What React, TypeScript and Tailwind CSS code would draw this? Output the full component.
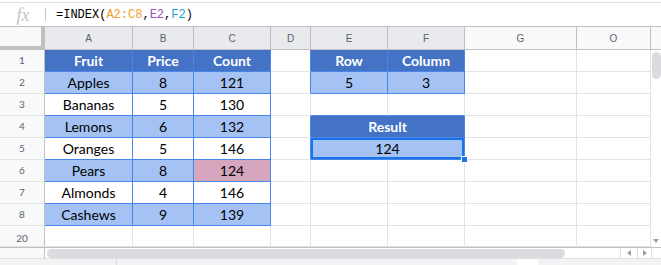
import React from 'react';

type Kind = 'hdr' | 'lite' | 'pink' | 'plain';
type Cell = { text?: string; kind?: Kind; span?: number; sel?: boolean };

const COLS = ['A', 'B', 'C', 'D', 'E', 'F', 'G', 'O'];
const DARK_HDR = ['A', 'B', 'C', 'D', 'E', 'F'];

// table areas that get the blue border
const inTable = (r: number, c: number) => {
  if (r >= 1 && r <= 8 && c >= 0 && c <= 2) return true;
  if ([1, 2, 4, 5].includes(r) && (c === 4 || c === 5)) return true;
  return false;
};

const ROWS: { n: number; h: string; cells: Record<number, Cell> }[] = [
  { n: 1, h: 'h-[22px]', cells: { 0: { text: 'Fruit', kind: 'hdr' }, 1: { text: 'Price', kind: 'hdr' }, 2: { text: 'Count', kind: 'hdr' }, 4: { text: 'Row', kind: 'hdr' }, 5: { text: 'Column', kind: 'hdr' } } },
  { n: 2, h: 'h-[22px]', cells: { 0: { text: 'Apples', kind: 'lite' }, 1: { text: '8', kind: 'lite' }, 2: { text: '121', kind: 'lite' }, 4: { text: '5', kind: 'lite' }, 5: { text: '3', kind: 'lite' } } },
  { n: 3, h: 'h-[22px]', cells: { 0: { text: 'Bananas' }, 1: { text: '5' }, 2: { text: '130' } } },
  { n: 4, h: 'h-[22px]', cells: { 0: { text: 'Lemons', kind: 'lite' }, 1: { text: '6', kind: 'lite' }, 2: { text: '132', kind: 'lite' }, 4: { text: 'Result', kind: 'hdr', span: 2 } } },
  { n: 5, h: 'h-[22px]', cells: { 0: { text: 'Oranges' }, 1: { text: '5' }, 2: { text: '146' }, 4: { text: '124', kind: 'lite', span: 2, sel: true } } },
  { n: 6, h: 'h-[22px]', cells: { 0: { text: 'Pears', kind: 'lite' }, 1: { text: '8', kind: 'lite' }, 2: { text: '124', kind: 'pink' } } },
  { n: 7, h: 'h-[22px]', cells: { 0: { text: 'Almonds' }, 1: { text: '4' }, 2: { text: '146' } } },
  { n: 8, h: 'h-[22px]', cells: { 0: { text: 'Cashews', kind: 'lite' }, 1: { text: '9', kind: 'lite' }, 2: { text: '139', kind: 'lite' } } },
  { n: 20, h: 'h-[21px]', cells: {} },
];

const bgFor = (k?: Kind) =>
  k === 'hdr' ? 'bg-[#4472c4] text-white font-bold' : k === 'lite' ? 'bg-[#a4c2f4]' : k === 'pink' ? 'bg-[#d5a6bd]' : 'bg-white';

function Row({ n, h, cells }: { n: number; h: string; cells: Record<number, Cell> }) {
  const out: React.ReactNode[] = [];
  for (let c = 0; c < COLS.length; c++) {
    const cell = cells[c] || {};
    const span = cell.span || 1;
    const last = c + span - 1;
    const rightBlue = inTable(n, last) || inTable(n, last + 1);
    const bottomBlue = inTable(n, c) || inTable(n + 1, c);
    out.push(
      <div
        key={c}
        className={`relative flex items-center justify-center border-r border-b text-[14px] text-black ${h} ${bgFor(cell.kind)} ${rightBlue ? 'border-r-[#4a86e8]' : 'border-r-[#e2e3e3]'} ${bottomBlue ? 'border-b-[#4a86e8]' : 'border-b-[#e2e3e3]'} ${span === 2 ? 'col-span-2' : ''} ${cell.sel ? 'shadow-[inset_0_0_0_2px_#1a73e8]' : ''}`}
      >
        {cell.text}
        {cell.sel && (
          <div className="absolute -right-[4px] -bottom-[4px] w-[7px] h-[7px] bg-[#1a73e8] border border-white z-10" />
        )}
      </div>
    );
    c += span - 1;
  }
  return (
    <>
      <div className={`flex ${n === 20 ? 'items-end' : 'items-center'} justify-center bg-[#f8f9fa] border-r border-b border-r-[#c0c0c0] border-b-[#e2e3e3] text-[10px] text-[#5f6368] ${h}`}>
        {n}
      </div>
      {out}
    </>
  );
}

export default function App() {
  return (
    <div className="w-[661px] h-[265px] bg-white overflow-hidden flex flex-col" style={{ fontFamily: 'Lato, "Liberation Sans", sans-serif' }}>
      {/* Formula bar */}
      <div className="h-[24px] mt-[2px] border-t border-[#e0e0e0] flex items-center">
        <div className="w-[45px] flex items-center justify-center">
          <span className="text-[18px] italic text-[#c4c4c4] pl-[1px] leading-none" style={{ fontFamily: '"Liberation Serif", serif' }}>fx</span>
        </div>
        <div className="w-px h-[13px] bg-[#c7c7c7]" />
        <div className="pl-[10px] text-[12px] text-black" style={{ fontFamily: '"Liberation Mono", monospace' }}>
          =INDEX(<span className="text-[#f29c2b]">A2:C8</span>,<span className="text-[#9b51c0]">E2</span>,<span className="text-[#1aa3d9]">F2</span>)
        </div>
      </div>

      <div className="flex">
        {/* Grid */}
        <div className="grid grid-cols-[45px_88px_61px_77px_40px_77px_77px_112px_74px]">
          <div className="h-[24px] bg-[#f8f9fa] border-t border-t-[#c0c0c0] border-r-4 border-b-4 border-[#c0c0c0]" />
          {COLS.map((c) => (
            <div
              key={c}
              className={`h-[24px] flex items-center justify-center border-t border-r border-b border-[#c0c0c0] text-[10px] text-[#5f6368] ${DARK_HDR.includes(c) ? 'bg-[#e8eaed]' : 'bg-[#f8f9fa]'}`}
              style={{ fontFamily: '"Liberation Sans", Arial, sans-serif' }}
            >
              {c}
            </div>
          ))}
          {ROWS.map((r) => (
            <Row key={r.n} {...r} />
          ))}
        </div>

        {/* Vertical scrollbar */}
        <div className="w-[10px] flex flex-col">
          <div className="h-[24px] bg-[#f8f9fa] border-t border-b border-[#c0c0c0]" />
          <div className="flex-1 flex flex-col items-center pt-[2px] pb-[4px]">
            <div className="w-[9px] h-[27px] ml-[1px] rounded-full bg-[#dadce0]" />
            <div className="flex-1" />
            <div className="w-0 h-0 border-l-[3px] border-r-[3px] border-t-[4px] border-l-transparent border-r-transparent border-t-[#9aa0a6]" />
          </div>
        </div>
      </div>

      {/* Horizontal scrollbar */}
      <div className="h-[11px] flex border-t border-[#c0c0c0]">
        <div className="w-[45px] bg-[#f8f9fa] border-r border-[#c0c0c0]" />
        <div className="w-[575px] flex items-center pl-[2px]">
          <div className="w-[518px] h-[9px] rounded-full bg-[#dadce0]" />
        </div>
        <div className="w-[17px] flex items-center justify-center border-l border-[#e0e0e0]">
          <div className="w-0 h-0 border-t-[3px] border-b-[3px] border-r-[4px] border-t-transparent border-b-transparent border-r-[#9aa0a6]" />
        </div>
        <div className="w-[14px] flex items-center justify-center border-l border-[#e0e0e0]">
          <div className="w-0 h-0 border-t-[3px] border-b-[3px] border-l-[4px] border-t-transparent border-b-transparent border-l-[#9aa0a6]" />
        </div>
        <div className="flex-1 border-l border-[#e0e0e0]" />
      </div>

      {/* Sheet tabs strip */}
      <div className="flex-1 bg-[#f1f3f4] border-t border-[#e0e0e0] flex">
        <div className="w-[117px] border-r border-[#dadce0]" />
        <div className="w-[400px]" />
        <div className="w-[21px] bg-white" />
      </div>
    </div>
  );
}
